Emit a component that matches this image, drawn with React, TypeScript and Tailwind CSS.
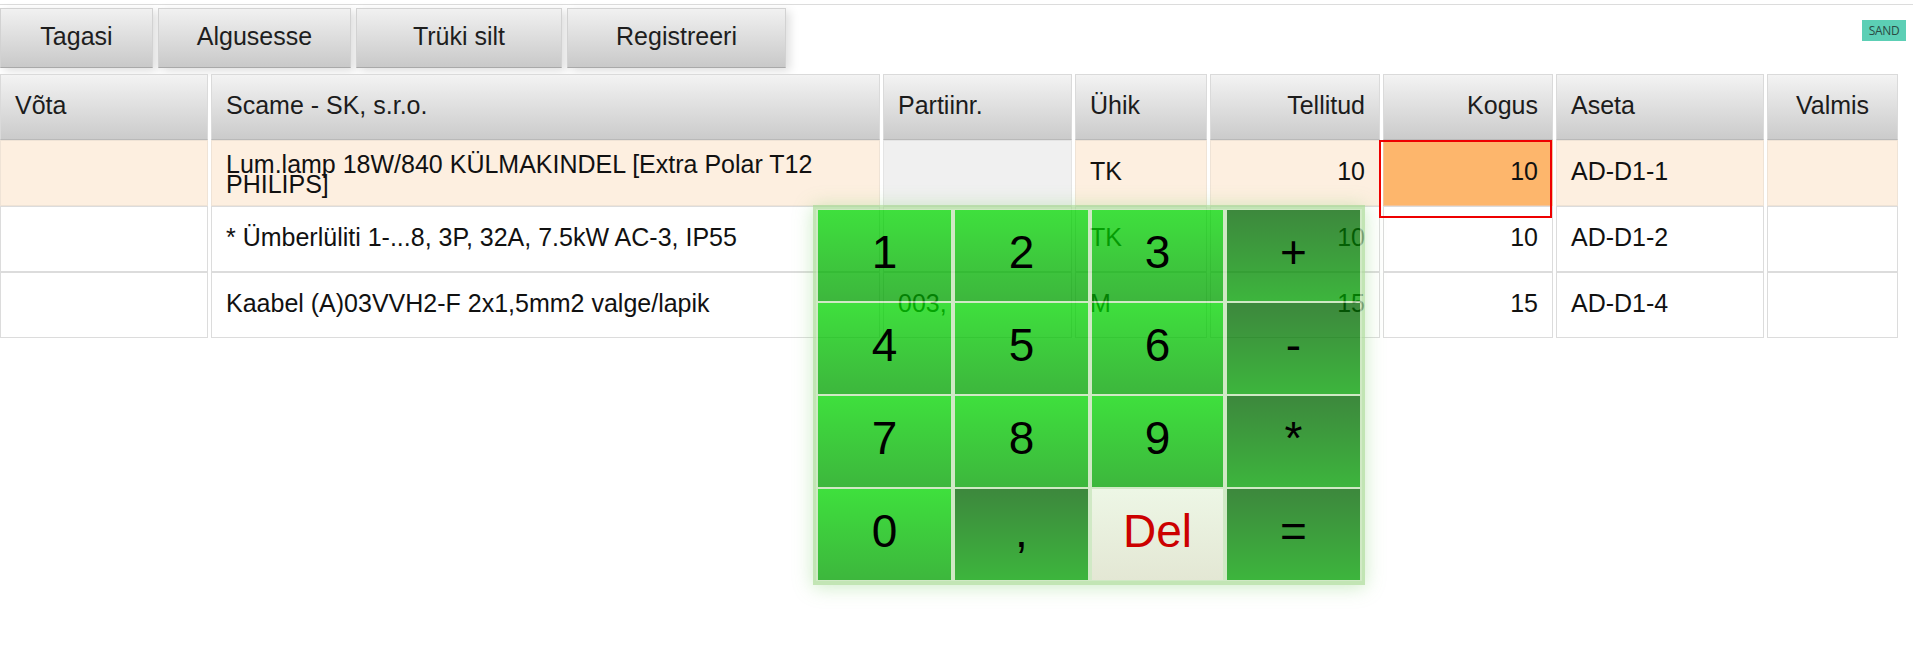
const cols =
  "grid grid-cols-[208px_669px_189px_132px_170px_170px_208px_131px] gap-x-[3px]";

type Align = "left" | "right" | "center";

const headers: { label: string; align: Align }[] = [
  { label: "Võta", align: "left" },
  { label: "Scame - SK, s.r.o.", align: "left" },
  { label: "Partiinr.", align: "left" },
  { label: "Ühik", align: "left" },
  { label: "Tellitud", align: "right" },
  { label: "Kogus", align: "right" },
  { label: "Aseta", align: "left" },
  { label: "Valmis", align: "center" },
];

type Row = {
  name: string;
  batch: string;
  unit: string;
  ordered: string;
  qty: string;
  place: string;
  active?: boolean;
};

const rows: Row[] = [
  {
    name: "Lum.lamp 18W/840 KÜLMAKINDEL [Extra Polar T12 PHILIPS]",
    batch: "",
    unit: "TK",
    ordered: "10",
    qty: "10",
    place: "AD-D1-1",
    active: true,
  },
  {
    name: "* Ümberlüliti 1-...8, 3P, 32A, 7.5kW AC-3, IP55",
    batch: "",
    unit: "TK",
    ordered: "10",
    qty: "10",
    place: "AD-D1-2",
  },
  {
    name: "Kaabel (A)03VVH2-F 2x1,5mm2 valge/lapik",
    batch: "003,",
    unit: "M",
    ordered: "15",
    qty: "15",
    place: "AD-D1-4",
  },
];

const alignClass: Record<Align, string> = {
  left: "justify-start text-left",
  right: "justify-end text-right",
  center: "justify-center text-center",
};

function Cell({
  children,
  align = "left",
  bg,
  pad = "pb-[4px]",
  extra,
}: {
  children?: React.ReactNode;
  align?: Align;
  bg: string;
  pad?: string;
  extra?: React.ReactNode;
}) {
  return (
    <div
      className={`relative flex h-[66px] items-center border px-[14px] leading-[20px] ${pad} ${alignClass[align]} ${bg}`}
    >
      <span>{children}</span>
      {extra}
    </div>
  );
}

type Key = { label: string; kind: "num" | "op" | "del" };

const keys: Key[] = [
  { label: "1", kind: "num" },
  { label: "2", kind: "num" },
  { label: "3", kind: "num" },
  { label: "+", kind: "op" },
  { label: "4", kind: "num" },
  { label: "5", kind: "num" },
  { label: "6", kind: "num" },
  { label: "-", kind: "op" },
  { label: "7", kind: "num" },
  { label: "8", kind: "num" },
  { label: "9", kind: "num" },
  { label: "*", kind: "op" },
  { label: "0", kind: "num" },
  { label: ",", kind: "op" },
  { label: "Del", kind: "del" },
  { label: "=", kind: "op" },
];

const keyStyle: Record<Key["kind"], string> = {
  num: "bg-linear-to-b from-[rgba(2,214,0,0.76)] to-[rgba(0,160,0,0.76)] text-black",
  op: "bg-linear-to-b from-[rgba(0,99,0,0.76)] to-[rgba(0,158,0,0.76)] text-black",
  del: "bg-linear-to-b from-[rgba(236,246,228,0.95)] to-[rgba(226,230,210,0.95)] text-[#cc0000]",
};

function Keypad() {
  return (
    <div className="absolute left-[813px] top-[205px] grid grid-cols-[137px_137px_135px_137px] grid-rows-[93px_93px_93px_93px] border-[4px] border-x-[3px] border-[rgba(168,218,148,0.7)] shadow-[0_2px_18px_rgba(110,200,90,0.35)]">
      {keys.map((k) => (
        <div
          key={k.label}
          className={`flex items-center justify-center border-x-2 border-y border-[rgba(196,228,182,0.8)] bg-clip-padding pb-[8px] text-[46px] leading-none ${keyStyle[k.kind]}`}
        >
          {k.label}
        </div>
      ))}
    </div>
  );
}

export default function App() {
  const buttons = [
    { label: "Tagasi", w: "w-[153px]" },
    { label: "Algusesse", w: "w-[193px]" },
    { label: "Trüki silt", w: "w-[206px]" },
    { label: "Registreeri", w: "w-[219px]" },
  ];

  return (
    <div className="relative h-[664px] w-full overflow-hidden bg-white font-['Liberation_Sans',Arial,sans-serif] text-[25px] text-[#111]">
      <div className="mt-[4px] h-px bg-[#dcdcdc]" />

      <div className="mt-[3px] flex gap-[5px]">
        {buttons.map((b) => (
          <div
            key={b.label}
            className={`flex h-[60px] items-center justify-center border border-[#d2d2d2] border-b-[#a9a9a9] bg-linear-to-b from-[#f1f1f1] to-[#c9c9c9] pb-[2px] text-[#1e1e1e] shadow-[4px_3px_9px_rgba(0,0,0,0.13)] ${b.w}`}
          >
            {b.label}
          </div>
        ))}
        <div className="mr-[7px] ml-auto mt-[12px] flex h-[21px] w-[44px] items-center justify-center self-start bg-[#5ccfb5] font-['Open_Sans',sans-serif] text-[12px] tracking-[-0.3px] text-[#2b4a44]">
          SAND
        </div>
      </div>

      <div className={`mt-[6px] ${cols}`}>
        {headers.map((h) => (
          <Cell
            key={h.label}
            align={h.align}
            bg="border-[#dadada] border-b-[#b9b9b9] bg-linear-to-b from-[#f3f3f3] to-[#cbcbcb] text-[#1c1c1c]"
          >
            {h.label}
          </Cell>
        ))}

        {rows.map((r) => {
          const base = r.active
            ? "border-[#efe3d6] bg-[#fdefe0]"
            : "border-[#dcdcdc] bg-white";
          return [
            <Cell key={r.name + "a"} bg={base} />,
            <Cell key={r.name + "b"} bg={base} pad={r.active ? "pt-[2px]" : "pb-[4px]"}>
              {r.name}
            </Cell>,
            <Cell
              key={r.name + "c"}
              bg={r.active ? "border-[#e4e4e4] bg-[#f0f0f0]" : base}
            >
              {r.batch}
            </Cell>,
            <Cell key={r.name + "d"} bg={base}>
              {r.unit}
            </Cell>,
            <Cell key={r.name + "e"} bg={base} align="right">
              {r.ordered}
            </Cell>,
            <Cell
              key={r.name + "f"}
              bg={r.active ? "z-10 border-[#f2c39a] bg-[#fdb66c]" : base}
              align="right"
              extra={
                r.active ? (
                  <div className="absolute left-[-5px] top-[-1px] h-[78px] w-[173px] border-2 border-[#ee0000]" />
                ) : null
              }
            >
              {r.qty}
            </Cell>,
            <Cell key={r.name + "g"} bg={base}>
              {r.place}
            </Cell>,
            <Cell key={r.name + "h"} bg={base} />,
          ];
        })}
      </div>

      <Keypad />
    </div>
  );
}
